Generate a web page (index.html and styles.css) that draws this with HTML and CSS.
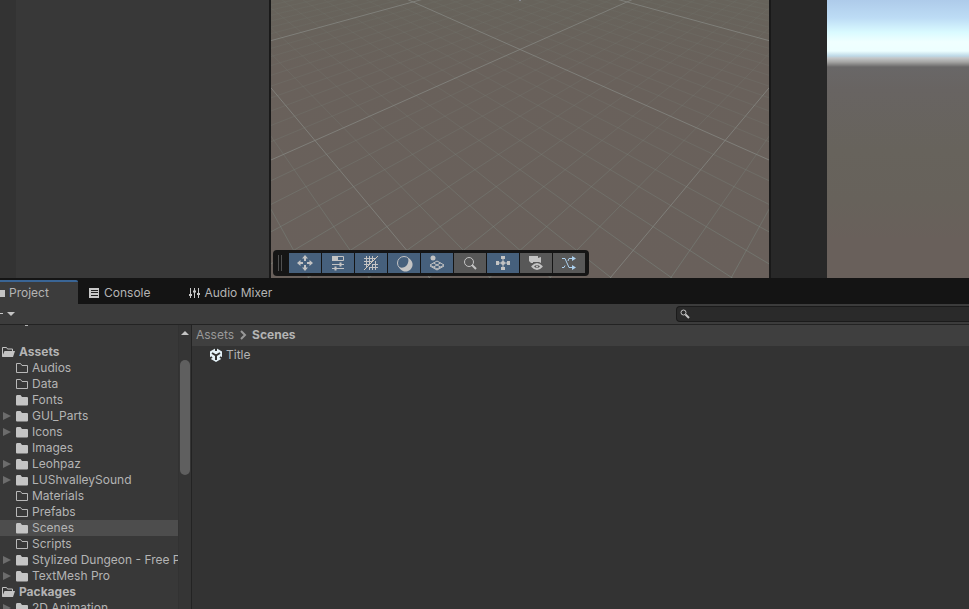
FILE: index.html
```html
<!DOCTYPE html>
<html lang="en">
<head>
<meta charset="utf-8">
<meta name="viewport" content="width=device-width, initial-scale=1">
<title>Project - Scenes</title>
<link rel="stylesheet" href="styles.css">
</head>
<body>
<svg class="defs" aria-hidden="true">
  <symbol id="folder" viewBox="0 0 14 16"><path d="M1 4.500Q1 3 2 3h3.500l1.500 2h5q1 0 1 1v6.500q0 1-1 1H2q-1 0-1-1z" fill="#c4c4c4"/></symbol>
  <symbol id="folder-empty" viewBox="0 0 14 16"><path d="M1.500 12.500v-9h4l1.500 2h5.500v7z" fill="none" stroke="#b8b8b8"/></symbol>
  <symbol id="folder-open" viewBox="0 0 14 16"><path d="M1.500 12.500v-9h4l1 1.500h5v2" fill="none" stroke="#c4c4c4"/><path d="M3.500 7H14l-2 6H1z" fill="#c4c4c4"/></symbol>
</svg>
<main class="editor">
  <div class="views">
    <aside class="hierarchy"><div class="gutter"></div></aside>
    <section class="scene" aria-label="Scene">
      <svg class="grid" viewBox="0 0 498 278" preserveAspectRatio="xMidYMin slice" aria-hidden="true">
        <defs>
          <linearGradient id="fade" gradientUnits="userSpaceOnUse" x1="0" y1="0" x2="0" y2="278">
            <stop offset="0" stop-color="#7c8a82" stop-opacity=".1"/>
            <stop offset=".45" stop-color="#7c8a82" stop-opacity=".2"/>
            <stop offset="1" stop-color="#7c8a82" stop-opacity=".5"/>
          </linearGradient>
        </defs>
        <g id="lines" fill="none"></g>
        <path d="M248 0h2" stroke="#a9b2c5"/>
      </svg>
      <div class="overlay" role="toolbar" aria-label="Scene tools">
        <span class="grip"></span>
        <button class="tool on" type="button" aria-label="Move"><svg viewBox="0 0 18 18"><path d="M9 3v4M9 11v4M3 9h4M11 9h4" stroke-width="2"/><path class="solid" d="M9 1l3 3.500H6zM9 17l3-3.500H6zM1 9l3.500-3v6zM17 9l-3.500-3v6z"/></svg></button>
        <button class="tool on" type="button" aria-label="Settings"><svg viewBox="0 0 18 18"><path class="solid" d="M3 2h6v5H3z"/><path d="M3.500 2.500h11v4h-11zM3 10.500h12M3 14.500h12" /><path d="M11.500 8.500v4M6.500 12.500v4" stroke-width="2"/></svg></button>
        <button class="tool on" type="button" aria-label="Grid"><svg viewBox="0 0 18 18"><path d="M4.500 2v12M7.500 2v9M10.500 2v5M10.500 10v6M13.500 7v9M7.500 13v3M2 4.500h11M2 7.500h8M2 10.500h5M10 10.500h6M7 13.500h9"/><path d="M2 16L16 2" stroke="#d5cabb"/></svg></button>
        <button class="tool on" type="button" aria-label="Shading"><svg viewBox="0 0 18 18"><circle cx="9" cy="9" r="6.500"/><path class="solid" d="M13 4a7 7 0 1 1-9 9c2 1 5 1 7-1s3-5 2-8z"/></svg></button>
        <button class="tool on" type="button" aria-label="Layers"><svg viewBox="0 0 18 18"><circle class="solid" cx="5" cy="4" r="2.500"/><path d="M2 11l7-4 7 4-7 4zM5.500 13l7-4M5.500 9l7 4"/><path d="M2 12l7 4 7-4" /></svg></button>
        <button class="tool" type="button" aria-label="Search scene"><svg viewBox="0 0 18 18"><circle cx="8" cy="8" r="4.500"/><path d="M11 11l4 4" stroke-width="2"/></svg></button>
        <button class="tool on" type="button" aria-label="Pivot"><svg viewBox="0 0 18 18"><path d="M9 3v12M3 9h12"/><path class="solid" d="M7 2h4v3H7zM7 13h4v3H7zM2 7h3v4H2zM13 7h3v4h-3z"/><circle class="solid" cx="9" cy="9" r="2"/></svg></button>
        <button class="tool" type="button" aria-label="Camera"><svg viewBox="0 0 18 18"><path class="solid" d="M2 2h9v2l3-1v6l-2-1H6v1H4L2 7z"/><path d="M5.500 12.500Q10 7.500 14.500 12.500Q10 17.500 5.500 12.500z" fill="#585858" stroke-width="2"/><circle class="solid" cx="10" cy="12.500" r="1"/></svg></button>
        <button class="tool shuffle" type="button" aria-label="Shuffle"><svg viewBox="0 0 18 18"><path d="M2 4.500h3l4 9h4M2 13.500h2l1-2M8 7l1-2.500h5"/><path class="solid" d="M12 2l4 2.500L12 7zM12 11l4 2.500-4 2.500z"/></svg></button>
      </div>
    </section>
    <section class="game" aria-label="Game"><div class="render"></div></section>
  </div>
  <nav class="tabs">
    <button class="tab active" type="button"><svg class="tab-icon" viewBox="0 0 12 12"><path d="M1 2h5l1 1h5v7H1z" fill="#c4c4c4"/></svg>Project</button>
    <button class="tab console" type="button"><svg class="tab-icon" viewBox="0 0 12 12"><path d="M1 1h10v10H1z" fill="#c8c8c8"/><path d="M3 3.500h7M3 5.500h7M3 8.500h7" stroke="#222"/></svg>Console</button>
    <button class="tab mixer" type="button"><svg class="tab-icon" viewBox="0 0 12 12"><path d="M2.500 1v10M6.500 1v10M10.500 1v10" stroke="#c8c8c8"/><path d="M1 8h3M5 4.500h3M9 7h3" stroke="#c8c8c8" stroke-width="2"/></svg>Audio Mixer</button>
  </nav>
  <div class="bar">
    <button class="create" type="button" aria-label="Create"><svg viewBox="0 0 18 20"><path d="M0 9.500h3" stroke="#c8c8c8"/><path d="M7 8h8l-4 4z" fill="#c4c4c4"/></svg></button>
    <label class="search"><svg viewBox="0 0 12 12"><circle cx="4.500" cy="4.500" r="2.500" fill="none" stroke="#c4c4c4"/><path d="M6.500 6.500L10 10" stroke="#c4c4c4" stroke-width="2"/></svg><input type="search" aria-label="Search assets"></label>
  </div>
  <div class="project">
    <div class="side">
      <ul class="tree">
        <li class="previous"></li>
        <li class="root"><svg class="folder"><use href="#folder-open"/></svg>Assets</li>
        <li><svg class="folder"><use href="#folder-empty"/></svg>Audios</li>
        <li><svg class="folder"><use href="#folder-empty"/></svg>Data</li>
        <li><svg class="folder"><use href="#folder"/></svg>Fonts</li>
        <li class="more"><svg class="folder"><use href="#folder"/></svg>GUI_Parts</li>
        <li class="more"><svg class="folder"><use href="#folder"/></svg>Icons</li>
        <li><svg class="folder"><use href="#folder"/></svg>Images</li>
        <li class="more"><svg class="folder"><use href="#folder"/></svg>Leohpaz</li>
        <li class="more"><svg class="folder"><use href="#folder"/></svg>LUShvalleySound</li>
        <li><svg class="folder"><use href="#folder-empty"/></svg>Materials</li>
        <li><svg class="folder"><use href="#folder-empty"/></svg>Prefabs</li>
        <li class="selected"><svg class="folder"><use href="#folder"/></svg>Scenes</li>
        <li><svg class="folder"><use href="#folder-empty"/></svg>Scripts</li>
        <li class="more"><svg class="folder"><use href="#folder"/></svg>Stylized Dungeon - Free Pack</li>
        <li class="more"><svg class="folder"><use href="#folder"/></svg>TextMesh Pro</li>
        <li class="root"><svg class="folder"><use href="#folder-open"/></svg>Packages</li>
        <li class="more"><svg class="folder"><use href="#folder"/></svg>2D Animation</li>
      </ul>
      <div class="scroll"><span class="up"></span><span class="thumb"></span></div>
    </div>
    <section class="files">
      <nav class="crumbs"><a href="#assets">Assets</a><svg viewBox="0 0 8 12"><path d="M2 2l4 4-4 4" fill="none" stroke="#999" stroke-width="2"/></svg><a class="current" href="#scenes">Scenes</a></nav>
      <a class="file" href="#title"><svg viewBox="0 0 14 14"><path d="M7 0l6 3.500v7L7 14l-6-3.500v-7z" fill="#e4f1f7"/><path d="M7 7.500V12M7 7.500L3 5M7 7.500l4-2.500M7 0v3M0 11l3-2M14 11l-3-2" stroke="#333" stroke-width="2"/></svg>Title</a>
    </section>
  </div>
</main>
<script src="grid.js"></script>
</body>
</html>
```
FILE: styles.css
```css
* { box-sizing: border-box; }
body { margin: 0; background: #333; color: #b4b4b4; font: 12px/16px Inter, "Liberation Sans", sans-serif; }
button { border: 0; padding: 0; color: inherit; font: inherit; background: none; }
a { color: inherit; text-decoration: none; }
.defs { position: absolute; width: 0; height: 0; }
.editor { height: 100vh; display: flex; flex-direction: column; overflow: hidden; }
.views { flex: 1 1 278px; min-height: 0; display: grid; grid-template-columns: 271fr 498fr 200fr; background: #191919; }
.hierarchy { background: #383838; border-right: 2px solid #191919; display: flex; }
.gutter { width: 16px; background: #333; }
.scene { position: relative; overflow: hidden; background: linear-gradient(#67635b, #69615b 25%, #69605b); }
.grid { display: block; width: 100%; height: 100%; }
.minor { stroke: url(#fade); }
.major { stroke: #858681; stroke-opacity: .8; }
.overlay { position: absolute; left: 2px; bottom: 2px; height: 26px; padding: 3px 4px 3px 5px; display: flex; gap: 1px; background: #151515; border-radius: 4px; }
.grip { width: 4px; margin: 2px 6px 2px 0; border: solid #505050; border-width: 0 1px; }
.tool { width: 32px; height: 20px; display: grid; place-items: center; background: #585858; color: #c4c4c4; }
.tool.on { background: #46607c; }
.tool.shuffle { color: #acd0ee; }
.tool svg { width: 18px; height: 18px; fill: none; stroke: currentColor; }
.tool .solid { fill: currentColor; stroke: none; }
.game { border-left: 2px solid #191919; background: #282828; padding-left: 56px; }
.render { height: 100%; background: linear-gradient(#aecbea 0, #bddcf5 18px, #d9faff 32px, #f0ffff 42px, #edffff 51px, #bdd8e6 56px, #c4c7c8 58px, #a5a5a3 62px, #696767 67px, #686462 90px, #67635c 150px, #67625b 200px, #69605b 240px); }
.tabs { flex: none; height: 26px; display: flex; background: #141414; }
.tab { display: flex; align-items: center; gap: 4px; }
.tab-icon { width: 12px; height: 12px; flex: none; }
.tab.active { width: 78px; margin-top: 2px; background: #3c3c3c; border-top: 2px solid #3a6595; border-radius: 0 2px 0 0; justify-content: flex-start; }
.active .tab-icon { margin-left: -7px; }
.tab.console { margin-left: 10px; }
.tab.mixer { margin-left: 38px; }
.tab.console, .tab.mixer { padding-top: 3px; }
.bar { flex: none; height: 21px; display: flex; align-items: center; justify-content: space-between; background: #3c3c3c; border-bottom: 1px solid #232323; }
.create { height: 20px; }
.create svg { display: block; width: 18px; height: 20px; }
.search { width: 293px; height: 16px; padding-left: 2px; display: flex; align-items: center; border: 1px solid #1b1b1b; border-right: 0; border-radius: 4px 0 0 4px; background: #2a2a2a; }
.search svg { width: 12px; height: 12px; }
.search input { flex: 1; min-width: 0; border: 0; padding: 0; outline: 0; background: none; color: inherit; font: inherit; }
.project { flex: none; height: 284px; display: flex; }
.side { width: 192px; display: flex; background: #383838; border-right: 1px solid #232323; }
.tree { flex: 1; min-width: 0; margin: 0; padding: 0; list-style: none; overflow: hidden; }
.tree li { height: 16px; padding-left: 15px; display: flex; align-items: center; gap: 3px; white-space: nowrap; overflow: hidden; position: relative; }
.tree .previous { height: 19px; padding-left: 25px; align-items: flex-start; }
.tree .previous::before { content: ""; width: 3px; height: 1px; background: #b4b4b4; }
.tree .root { padding-left: 1px; gap: 4px; font-weight: 700; }
.tree .selected { background: #4d4d4d; }
.tree .more::before { content: ""; position: absolute; left: 3px; top: 4px; border: solid transparent; border-width: 4px 0 4px 8px; border-left-color: #6c6c6c; }
.folder { width: 14px; height: 16px; flex: none; }
.scroll { width: 13px; padding: 6px 1px 0; background: #353535; border-left: 1px solid #323232; display: flex; flex-direction: column; align-items: center; gap: 25px; }
.up { border: solid transparent; border-width: 0 4px 4px; border-bottom-color: #c4c4c4; }
.thumb { width: 10px; height: 115px; flex: none; border-radius: 5px; background: #5f5f5f; }
.files { flex: 1; min-width: 0; background: #333; }
.crumbs { height: 21px; padding: 0 0 1px 4px; display: flex; align-items: center; gap: 5px; background: #3f3f3f; color: #999; }
.crumbs svg { width: 8px; height: 12px; }
.current { font-weight: 700; color: #b4b4b4; }
.file { display: flex; align-items: center; gap: 3px; height: 18px; padding-left: 17px; }
.file svg { width: 14px; height: 14px; }
```
FILE: grid.js
```js
// Perspective ground plane: ten minor cells to each major one.
const group = document.getElementById("lines");
const DEPTH = 3.18;
const project = (a, b) => {
  const d = DEPTH - a - b;
  return (249 + 447 * (a - b) / d).toFixed(1) + " " + (631 / d - 149).toFixed(1);
};
for (let i = -30; i <= 25; i++) {
  const a = i / 10;
  const far = -4;
  const near = DEPTH - a - 0.5;
  const path = document.createElementNS("http://www.w3.org/2000/svg", "path");
  path.setAttribute("class", i % 10 ? "minor" : "major");
  path.setAttribute("d", `M${project(a, far)}L${project(a, near)}M${project(far, a)}L${project(near, a)}`);
  group.append(path);
}
```
